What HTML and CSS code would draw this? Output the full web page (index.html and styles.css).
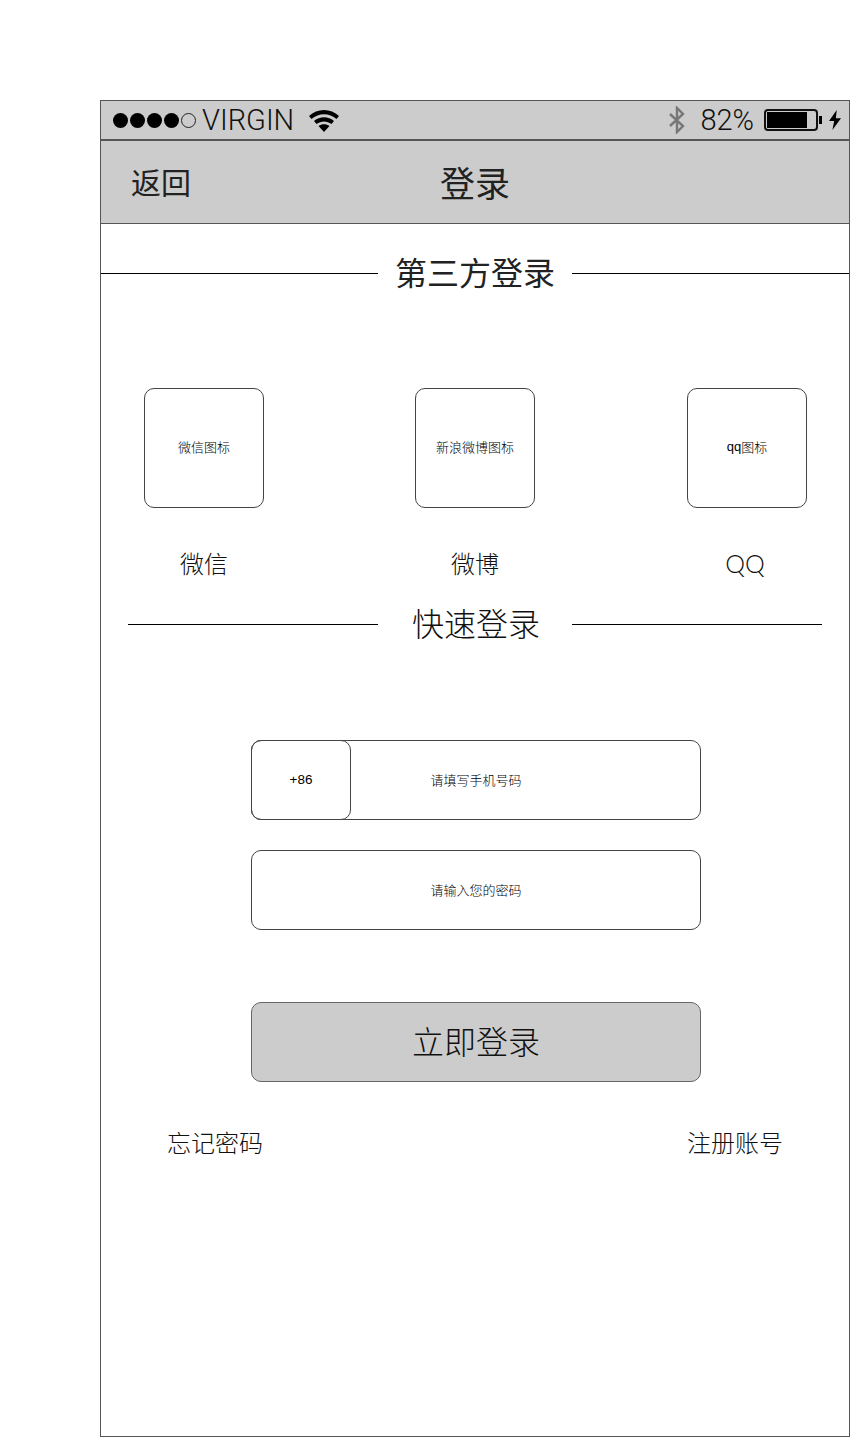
FILE: index.html
```html
<!DOCTYPE html>
<html lang="zh-CN">
<head>
  <meta charset="UTF-8" />
  <meta name="viewport" content="width=device-width, initial-scale=1.0" />
  <title>登录</title>
  <link rel="stylesheet" href="styles.css">
</head>
<body>
<div class="phone">
  <!-- status bar -->
  <div class="status">
    <div class="status-left">
      <span class="dots"><i></i><i></i><i></i><i></i><i class="off"></i></span>
      <span class="carrier">VIRGIN</span>
      <svg class="wifi" width="32" height="26" viewBox="0 0 32 26">
        <path d="M1 9 C9 1 23 1 31 9 L28.5 12 C21.500 5.500 10.500 5.500 3.500 12 Z" fill="#000"/>
        <path d="M6 14 C12 9 20 9 26 14 L23.500 17 C19 13.500 13 13.500 8.500 17 Z" fill="#000"/>
        <path d="M10.500 19 C14 16.500 18 16.500 21.500 19 L16 25 Z" fill="#000"/>
      </svg>
    </div>
    <div class="status-right">
      <svg class="bt" width="18" height="28" viewBox="0 0 18 28">
        <path d="M2 8 L15 20 L9 26 L9 2 L15 8 L2 20" fill="none" stroke="#777" stroke-width="2.400"/>
      </svg>
      <span class="pct">82%</span>
      <span class="battery"><span class="battery-fill"></span></span>
      <span class="battery-tip"></span>
      <svg class="bolt" width="12" height="20" viewBox="0 0 14 22" preserveAspectRatio="none">
        <path d="M9 0 L0 12 L6 12 L4 22 L14 9 L8 9 Z" fill="#000"/>
      </svg>
    </div>
  </div>

  <!-- nav -->
  <div class="nav">
    <span class="back">返回</span>
    <span class="nav-title">登录</span>
  </div>

  <!-- third party -->
  <div class="divider divider-full"><span>第三方登录</span></div>
  <div class="socials">
    <div class="social">
      <div class="social-icon">微信图标</div>
      <div class="social-name">微信</div>
    </div>
    <div class="social">
      <div class="social-icon">新浪微博图标</div>
      <div class="social-name">微博</div>
    </div>
    <div class="social">
      <div class="social-icon"><span class="latin">qq</span>图标</div>
      <div class="social-name social-name-qq">QQ</div>
    </div>
  </div>

  <!-- quick login -->
  <div class="divider divider-short"><span>快速登录</span></div>
  <div class="form">
    <div class="field">
      <div class="prefix">+86</div>
      请填写手机号码
    </div>
    <div class="field">请输入您的密码</div>
    <div class="submit">立即登录</div>
  </div>
  <div class="links">
    <span>忘记密码</span>
    <span>注册账号</span>
  </div>
</div>
</body>
</html>
```

FILE: styles.css
```css
html,body{margin:0;padding:0;background:#fff;color:#222;font-family:"Noto Sans CJK SC","Liberation Sans",sans-serif;}
body{padding:100px 0 0 100px;box-sizing:border-box;height:1437px;overflow:hidden;}
.phone{width:750px;height:1337px;box-sizing:border-box;border:1px solid #555;}

.status{height:38px;background:#ccc;border-bottom:2px solid #555;display:flex;justify-content:space-between;align-items:center;font-family:Roboto,"Liberation Sans",sans-serif;font-weight:300;color:#111;}
.status-left,.status-right{display:flex;align-items:center;}
.status-left{padding-left:12px;}
.status-right{padding-right:8px;}
.dots{display:flex;gap:2px;}
.dots i{width:15px;height:15px;border-radius:50%;background:#000;box-sizing:border-box;}
.dots i.off{background:none;border:1px solid #222;}
.carrier{font-size:29px;margin-left:6px;}
.wifi{margin-left:14px;}
.bt{margin-right:14px;}
.pct{font-size:29px;margin-right:10px;}
.battery{width:54px;height:22px;box-sizing:border-box;border:2px solid #111;border-radius:4px;padding:1px;display:block;}
.battery-fill{display:block;width:40px;height:16px;background:#000;}
.battery-tip{width:3px;height:8px;background:#000;margin-left:1px;}
.bolt{margin-left:7px;}

.nav{height:82px;background:#ccc;border-bottom:1px solid #555;display:grid;grid-template-columns:1fr;align-items:center;justify-items:center;position:relative;}
.back{position:absolute;left:30px;top:18px;font-size:30px;line-height:44px;}
.nav-title{font-size:35px;line-height:44px;}

.divider{display:flex;align-items:center;font-size:32px;font-weight:300;}
.divider:before,.divider:after{content:"";flex:1;height:1px;background:#000;}
.divider span{width:194px;text-align:center;line-height:46px;white-space:nowrap;}
.divider-full{margin-top:24px;font-weight:400;}
.divider-full span{padding-bottom:4px;}
.divider-short{margin:16px 27px 0;color:#111;}
.divider-short span{padding:0 0 4px 2px;box-sizing:border-box;}

.socials{display:flex;gap:151px;padding:90px 0 0 43px;}
.social{width:120px;}
.social:last-child{margin-left:1px;}
.social-icon{height:114px;padding-bottom:4px;border:1px solid #444;border-radius:10px;display:flex;align-items:center;justify-content:center;font-size:13px;font-weight:300;color:#000;}
.latin{font-family:"Liberation Sans",sans-serif;}
.social-name{margin-top:35px;height:40px;line-height:40px;text-align:center;font-size:24px;font-weight:300;color:#111;}
.social-name-qq{font-family:Lato,"Liberation Sans",sans-serif;font-size:25px;padding-right:4px;}

.form{width:450px;margin:91px 0 0 150px;}
.field{height:76px;padding-bottom:2px;border:1px solid #444;border-radius:10px;margin-bottom:30px;display:flex;align-items:center;justify-content:center;font-size:13px;font-weight:300;color:#000;position:relative;}
.prefix{position:absolute;left:-1px;top:-1px;width:98px;height:76px;padding-bottom:2px;border:1px solid #444;border-radius:10px;display:flex;align-items:center;justify-content:center;font-family:"Liberation Sans",sans-serif;font-size:13.5px;}
.submit{height:74px;padding-bottom:4px;margin-top:72px;background:#ccc;border:1px solid #666;border-radius:10px;display:flex;align-items:center;justify-content:center;font-size:32px;font-weight:300;color:#111;}
.links{display:flex;justify-content:space-between;padding:40px 66px 0;font-size:24px;font-weight:300;line-height:40px;color:#111;}
```
